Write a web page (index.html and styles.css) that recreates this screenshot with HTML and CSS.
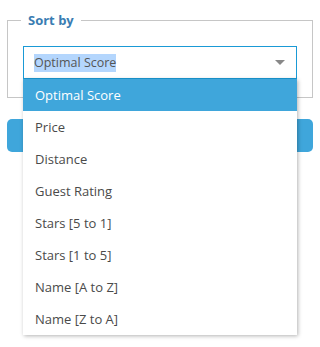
FILE: index.html
```html
<!DOCTYPE html>
<html lang="en">
<head>
    <meta charset="UTF-8">
    <title>Sort by</title>
    <link rel="stylesheet" href="styles.css">
</head>
<body>
    <div class="panel">
        <div class="sort-box">
            <span class="sort-label">Sort by</span>
            <div class="select-wrap">
                <div class="select">
                    <span class="select-value">Optimal Score</span>
                    <span class="select-arrow"></span>
                </div>
                <ul class="options">
                    <li class="active">Optimal Score</li>
                    <li>Price</li>
                    <li>Distance</li>
                    <li>Guest Rating</li>
                    <li>Stars [5 to 1]</li>
                    <li>Stars [1 to 5]</li>
                    <li>Name [A to Z]</li>
                    <li>Name [Z to A]</li>
                </ul>
            </div>
        </div>
        <button class="apply-button">Apply</button>
    </div>
</body>
</html>
```

FILE: styles.css
```css
html, body {
    min-height: 347px;
}

body {
    margin: 0;
    font-family: 'Open Sans', sans-serif;
    background: white;
}

.panel {
    padding: 20px 7px 0 7px;
    width: 306px;
    min-height: 327px;
}

.sort-box {
    position: relative;
    padding: 25px 15px 18px 15px;
    border: 1px solid #c6c6c6;
}

.sort-label {
    position: absolute;
    top: -9px;
    left: 13px;
    padding: 0 7px;
    background: white;
    font-size: 13px;
    font-weight: bold;
    color: #3a7db2;
    line-height: 17px;
}

.select-wrap {
    position: relative;
    z-index: 2;
}

.select {
    display: flex;
    align-items: center;
    justify-content: space-between;
    height: 31px;
    padding: 0 10px;
    border: 1px solid #1a9ad6;
    font-size: 12.5px;
    color: #555;
}

.select-value {
    background: #b4d6fd;
    line-height: 18px;
}

.select-arrow {
    width: 0;
    height: 0;
    margin-right: 1px;
    border-left: 5px solid transparent;
    border-right: 5px solid transparent;
    border-top: 5px solid #888;
}

.options {
    position: absolute;
    top: 33px;
    left: 0;
    width: 274px;
    margin: 0;
    padding: 0;
    list-style: none;
    background: white;
    box-shadow: 1px 1px 4px rgba(0,0,0,0.3);
}

.options li {
    height: 32px;
    line-height: 32px;
    padding-left: 12px;
    font-size: 13px;
    color: #4a4a4a;
}

.options li.active {
    background: #3fa6db;
    color: white;
}

.apply-button {
    display: block;
    width: 306px;
    height: 33px;
    margin-top: 21px;
    border: none;
    border-radius: 5px;
    background: #3fa6db;
    color: white;
    font-family: 'Open Sans', sans-serif;
    font-size: 13px;
}
```
